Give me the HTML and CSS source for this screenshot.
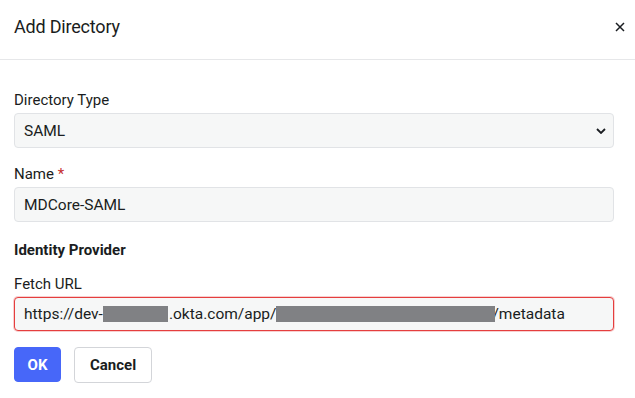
FILE: index.html
```html
<!DOCTYPE html>
<html lang="en">
<head>
    <meta charset="UTF-8">
    <title>Add Directory</title>
    <link rel="stylesheet" href="styles.css">
</head>
<body>
    <div class="modal">
        <!-- Header -->
        <div class="modal-header">
            <h2>Add Directory</h2>
            <button class="close" aria-label="Close">
                <svg width="10" height="10" viewBox="0 0 10 10">
                    <path d="M1 1L9 9M9 1L1 9" stroke="#1a1d21" stroke-width="1.5" fill="none"/>
                </svg>
            </button>
        </div>

        <!-- Form -->
        <div class="modal-body">
            <div class="field">
                <label>Directory Type</label>
                <div class="input select">
                    <span>SAML</span>
                    <svg width="10" height="6" viewBox="0 0 10 6">
                        <path d="M1 1L5 5L9 1" stroke="#1a1d21" stroke-width="1.8" fill="none"/>
                    </svg>
                </div>
            </div>

            <div class="field">
                <label>Name <span class="required">*</span></label>
                <div class="input">MDCore-SAML</div>
            </div>

            <h3 class="section-title">Identity Provider</h3>

            <div class="field">
                <label>Fetch URL</label>
                <div class="input invalid">https://dev-<span class="redact short"></span>.okta.com/app/<span class="redact long"></span>/metadata</div>
            </div>

            <div class="actions">
                <button class="btn primary">OK</button>
                <button class="btn">Cancel</button>
            </div>
        </div>
    </div>
</body>
</html>
```

FILE: styles.css
```css
/* Reset */
* {
    margin: 0;
    padding: 0;
    box-sizing: border-box;
}

body {
    width: 635px;
    height: 398px;
    background-color: #fff;
    font-family: Roboto, 'Liberation Sans', sans-serif;
    color: #1a1d21;
    overflow: hidden;
}

/* Header */
.modal-header {
    display: flex;
    justify-content: space-between;
    align-items: flex-start;
    height: 60px;
    padding: 15px 9px 0 14px;
    border-bottom: 1px solid #e6e7e9;
}

.modal-header h2 {
    font-size: 18px;
    font-weight: 400;
    line-height: 24px;
    letter-spacing: -0.2px;
}

.close {
    border: none;
    background: none;
    width: 12px;
    height: 12px;
    margin-top: 6px;
    display: flex;
    align-items: center;
    justify-content: center;
    cursor: pointer;
}

/* Body */
.modal-body {
    padding: 30px 21px 0 14px;
}

.field {
    display: flex;
    flex-direction: column;
    gap: 3px;
    margin-bottom: 16px;
}

.field label {
    font-size: 15px;
    line-height: 20px;
}

.required {
    color: #c53030;
}

.input {
    height: 35px;
    display: flex;
    align-items: center;
    padding: 0 9px;
    background-color: #f6f7f7;
    border: 1px solid #e1e3e6;
    border-radius: 4px;
    font-size: 15.5px;
    white-space: nowrap;
}

.select {
    justify-content: space-between;
    padding-right: 7px;
}

.input.invalid {
    border-color: #e53e3e;
    box-shadow: 0 0 0 1px rgba(229, 62, 62, 0.25);
    height: 34px;
}

.redact {
    display: inline-block;
    position: relative;
    height: 16px;
    background-color: #808184;
}

.redact.short {
    width: 65px;
    margin: 0 1px 0 0;
}

.redact.long {
    width: 219px;
    margin-right: -3px;
}

.section-title {
    font-size: 15px;
    font-weight: 700;
    line-height: 20px;
    margin: 18px 0 14px;
}

.field:last-of-type {
    gap: 4px;
    margin-bottom: 13px;
}

/* Buttons */
.actions {
    display: flex;
    gap: 13px;
}

.btn {
    height: 36px;
    padding: 0 15px;
    font-family: Roboto, 'Liberation Sans', sans-serif;
    font-size: 15px;
    font-weight: 700;
    color: #1a1d21;
    background-color: #fff;
    border: 1px solid #d3d5d9;
    border-radius: 4px;
    cursor: pointer;
}

.btn.primary {
    width: 47px;
    height: 35px;
    padding: 0;
    color: #fff;
    background-color: #4767f9;
    border-color: #4767f9;
}
```
